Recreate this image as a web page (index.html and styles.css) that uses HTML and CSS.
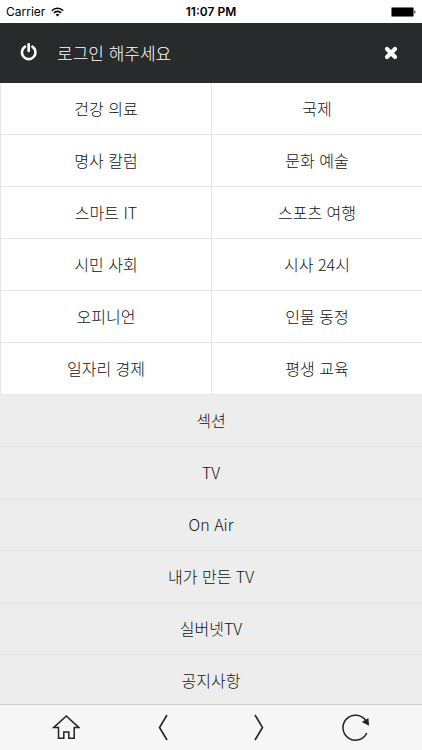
FILE: index.html
```html
<!DOCTYPE html>
<html lang="ko">
<head>
    <meta charset="UTF-8">
    <meta name="viewport" content="width=device-width, initial-scale=1.0">
    <title>실버넷TV</title>
    <link rel="stylesheet" href="styles.css">
</head>
<body>
    <div class="status-bar">
        <div class="carrier">
            <span>Carrier</span>
            <svg width="13" height="10" viewBox="0 0 13 10" fill="none" stroke="#000" stroke-width="1.6">
                <path d="M0.8 3.7a8 8 0 0 1 11.4 0"/>
                <path d="M2.9 5.9a5.1 5.1 0 0 1 7.2 0"/>
                <path d="M6.5 9.6L4.6 7.6a2.7 2.7 0 0 1 3.8 0z" fill="#000" stroke="none"/>
            </svg>
        </div>
        <span class="clock">11:07 PM</span>
        <svg class="battery" width="25" height="10" viewBox="0 0 25 10">
            <rect x="0.5" y="0.5" width="22" height="9" rx="1" fill="#000" stroke="#777"/>
            <path d="M23.5 3.2c1.3.5 1.3 3.1 0 3.6z" fill="#000"/>
        </svg>
    </div>

    <header class="menu-header">
        <a class="login" href="#login">
            <svg width="18" height="18" viewBox="0 0 18 18" fill="none" stroke="#fff" stroke-width="2.6" stroke-linecap="round">
                <path d="M5 3.6a6.8 6.8 0 1 0 7.4 0"/>
                <path d="M8.7 1.3v6.6"/>
            </svg>
            <span>로그인 해주세요</span>
        </a>
        <button class="close-btn" type="button" aria-label="닫기">
            <svg width="14" height="14" viewBox="0 0 14 14" stroke="#fff" stroke-width="4.2" stroke-linecap="round">
                <path d="M3 3l8 8M11 3l-8 8"/>
            </svg>
        </button>
    </header>

    <main class="menu">
        <nav class="category-grid">
            <a href="#health">건강 의료</a>
            <a href="#world">국제</a>
            <a href="#column">명사 칼럼</a>
            <a href="#culture">문화 예술</a>
            <a href="#smart">스마트 IT</a>
            <a href="#sports">스포츠 여행</a>
            <a href="#society">시민 사회</a>
            <a href="#issue">시사 24시</a>
            <a href="#opinion">오피니언</a>
            <a href="#people">인물 동정</a>
            <a href="#economy">일자리 경제</a>
            <a href="#education">평생 교육</a>
        </nav>
        <nav class="section-list">
            <a href="#section">섹션</a>
            <a href="#tv">TV</a>
            <a href="#onair">On Air</a>
            <a href="#mytv">내가 만든 TV</a>
            <a href="#silvernet">실버넷TV</a>
            <a href="#notice">공지사항</a>
        </nav>
    </main>

    <footer class="toolbar">
        <button type="button" aria-label="홈">
            <svg width="28" height="28" viewBox="0 0 28 28">
                <path d="M14.3 2L1.6 13.6H6.5v10.7h5.3v-6.2h5v6.2h5.4V13.6h4.8z"/>
            </svg>
        </button>
        <button type="button" aria-label="뒤로">
            <svg width="28" height="28" viewBox="0 0 28 28">
                <path d="M18 1L10.5 13.5L18 26" stroke-width="1.6"/>
            </svg>
        </button>
        <button type="button" aria-label="앞으로">
            <svg width="28" height="28" viewBox="0 0 28 28">
                <path d="M10 1L17.5 13.5L10 26" stroke-width="1.6"/>
            </svg>
        </button>
        <button type="button" aria-label="새로고침">
            <svg width="28" height="28" viewBox="0 0 28 28">
                <path d="M24 7A12.5 12.5 0 1 0 24.8 19"/>
                <path d="M21.4 8L25.8 5.2L26.2 10.4z" fill="#222"/>
            </svg>
        </button>
    </footer>
</body>
</html>
```
FILE: styles.css
```css
* {
    box-sizing: border-box;
}

body {
    margin: 0;
    height: 100vh;
    display: flex;
    flex-direction: column;
    overflow: hidden;
    background-color: #fff;
    color: #111;
    font-family: "Noto Sans CJK KR", sans-serif;
    font-size: 16px;
    font-weight: 300;
}

a {
    color: inherit;
    text-decoration: none;
}

button {
    padding: 0;
    border: none;
    background: none;
    cursor: pointer;
}

svg {
    display: block;
}

/* Status bar */
.status-bar {
    flex: none;
    display: grid;
    grid-template-columns: 1fr auto 1fr;
    align-items: center;
    height: 23px;
    padding: 0 6px;
    color: #000;
    font-family: Inter, sans-serif;
    font-size: 12px;
    font-weight: 400;
}

.carrier {
    display: flex;
    align-items: center;
    gap: 6px;
}

.clock {
    font-weight: 600;
}

.battery {
    justify-self: end;
}

/* Login header */
.menu-header {
    flex: none;
    display: flex;
    align-items: center;
    justify-content: space-between;
    height: 60px;
    padding: 0 24px 0 20px;
    background-color: #292a2c;
    color: #fff;
}

.login {
    display: flex;
    align-items: center;
    gap: 19px;
    padding-bottom: 2px;
    font-size: 17px;
}

/* Menu */
.menu {
    flex: 1;
    min-height: 0;
    overflow: hidden;
    background-color: #ededed;
}

.category-grid {
    display: grid;
    grid-template-columns: 1fr 1fr;
}

.category-grid a,
.section-list a {
    display: flex;
    align-items: center;
    justify-content: center;
    height: 52px;
    padding-bottom: 2px;
    border-bottom: 1px solid #e5e5e5;
}

.category-grid a {
    background-color: #fff;
    border-left: 1px solid #e5e5e5;
}

/* Bottom toolbar */
.toolbar {
    flex: none;
    display: flex;
    align-items: center;
    justify-content: space-between;
    height: 46px;
    padding: 0 52px;
    border-top: 1px solid #cfcfcf;
    background-color: #f6f6f6;
}

.toolbar svg {
    fill: none;
    stroke: #222;
    stroke-width: 1.5;
}
```
